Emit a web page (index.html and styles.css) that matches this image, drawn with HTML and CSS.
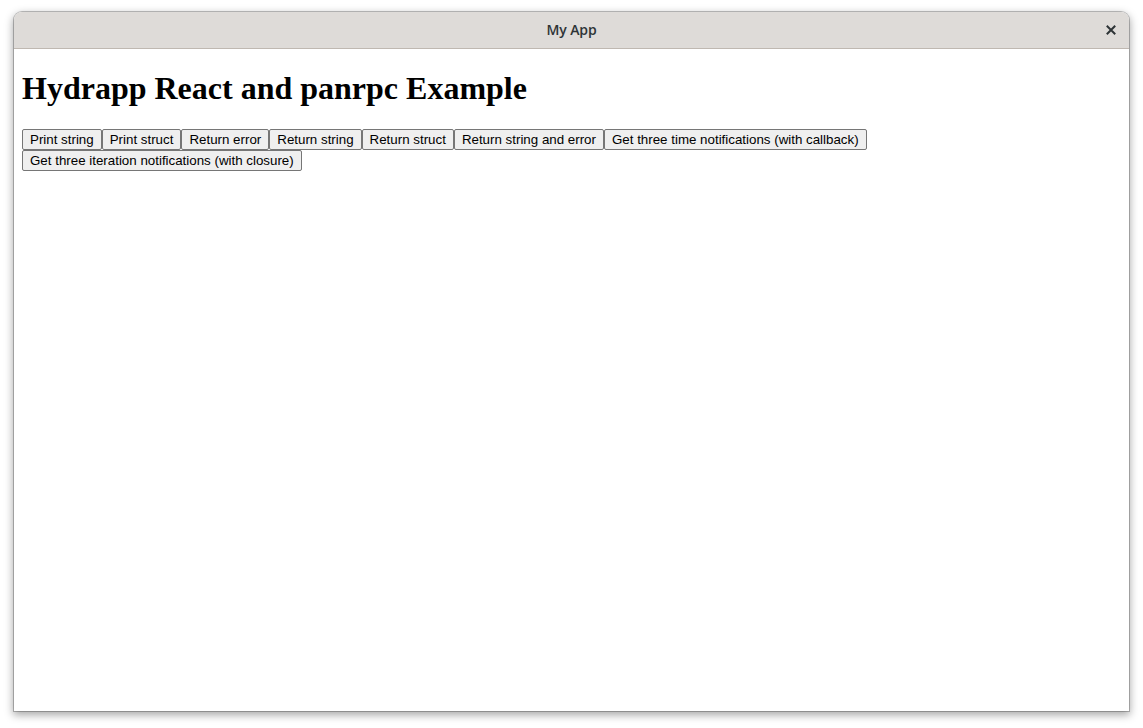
FILE: index.html
```html
<!DOCTYPE html>
<html lang="en">
<head>
    <meta charset="UTF-8">
    <meta name="viewport" content="width=device-width, initial-scale=1.0">
    <title>My App</title>
    <link rel="stylesheet" href="styles.css">
</head>
<body>

<div class="window">
    <header class="titlebar">
        <span class="title">My App</span>
        <button class="close-button" aria-label="Close">
            <svg width="10" height="10" viewBox="0 0 10 10">
                <path d="M1.5 1.5 L8.5 8.5 M8.5 1.5 L1.5 8.5" stroke="#2e3436" stroke-width="2" stroke-linecap="square" fill="none"/>
            </svg>
        </button>
    </header>

    <main class="content">
        <h1>Hydrapp React and panrpc Example</h1>
        <div class="actions"><button class="action">Print string</button><button class="action">Print struct</button><button class="action">Return error</button><button class="action">Return string</button><button class="action">Return struct</button><button class="action">Return string and error</button><button class="action">Get three time notifications (with callback)</button><button class="action">Get three iteration notifications (with closure)</button></div>
    </main>
</div>

</body>
</html>
```

FILE: styles.css
```css
* {
    box-sizing: border-box;
}

body {
    margin: 0;
    background-color: #ffffff;
    width: 1143px;
    height: 728px;
    overflow: hidden;
}

.window {
    margin: 12px 0 0 14px;
    width: 1115px;
    height: 699px;
    display: flex;
    flex-direction: column;
    background-color: #ffffff;
    border-radius: 8px 8px 0 0;
    box-shadow: 0 0 0 1px rgba(0, 0, 0, 0.23), 0 3px 9px 1px rgba(0, 0, 0, 0.35);
    overflow: hidden;
}

.titlebar {
    height: 37px;
    flex-shrink: 0;
    display: flex;
    align-items: center;
    justify-content: center;
    position: relative;
    padding-bottom: 2px;
    background-color: #dedbd8;
    border-bottom: 1px solid #bfb8b1;
}

.title {
    font-family: "Open Sans", "Noto Sans", sans-serif;
    font-size: 14px;
    font-weight: 600;
    color: #2e3436;
    letter-spacing: -0.1px;
}

.close-button {
    position: absolute;
    right: 11px;
    top: 11px;
    width: 14px;
    height: 14px;
    padding: 0;
    border: none;
    background: none;
    display: flex;
    align-items: center;
    justify-content: center;
}

.content {
    flex: 1;
    padding: 0 8px;
    font-family: "Liberation Serif", serif;
}

h1 {
    font-size: 32px;
    font-weight: bold;
    margin: 21.44px 0;
    line-height: 37px;
}

.actions {
    display: flex;
    flex-wrap: wrap;
}

.action {
    font-family: "Liberation Sans", Arial, sans-serif;
    font-size: 13.333px;
    line-height: 15px;
    height: 21px;
    padding: 1px 7px;
    margin: 0;
    color: #000000;
    background-color: #efefef;
    border: 1px solid #767676;
    border-radius: 2px;
}
```
